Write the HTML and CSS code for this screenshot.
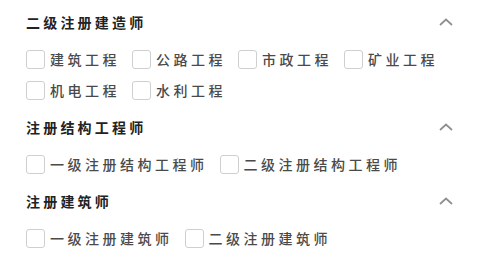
FILE: index.html
```html
<!DOCTYPE html>
<html lang="zh">
<head>
<meta charset="utf-8">
<link rel="stylesheet" href="styles.css">
</head>
<body>
<div class="panel">
  <section class="group">
    <div class="group-head">
      <span class="group-title">二级注册建造师</span>
      <svg class="chev" width="14" height="8" viewBox="0 0 14 8"><polyline points="1,7 7,1.5 13,7" fill="none" stroke="#8f8f8f" stroke-width="1.7"/></svg>
    </div>
    <div class="options">
      <label class="opt"><span class="box"></span><span class="txt">建筑工程</span></label>
      <label class="opt"><span class="box"></span><span class="txt">公路工程</span></label>
      <label class="opt"><span class="box"></span><span class="txt">市政工程</span></label>
      <label class="opt"><span class="box"></span><span class="txt">矿业工程</span></label>
      <label class="opt"><span class="box"></span><span class="txt">机电工程</span></label>
      <label class="opt"><span class="box"></span><span class="txt">水利工程</span></label>
    </div>
  </section>
  <section class="group">
    <div class="group-head">
      <span class="group-title">注册结构工程师</span>
      <svg class="chev" width="14" height="8" viewBox="0 0 14 8"><polyline points="1,7 7,1.5 13,7" fill="none" stroke="#8f8f8f" stroke-width="1.7"/></svg>
    </div>
    <div class="options">
      <label class="opt"><span class="box"></span><span class="txt">一级注册结构工程师</span></label>
      <label class="opt"><span class="box"></span><span class="txt">二级注册结构工程师</span></label>
    </div>
  </section>
  <section class="group">
    <div class="group-head">
      <span class="group-title">注册建筑师</span>
      <svg class="chev" width="14" height="8" viewBox="0 0 14 8"><polyline points="1,7 7,1.5 13,7" fill="none" stroke="#8f8f8f" stroke-width="1.7"/></svg>
    </div>
    <div class="options">
      <label class="opt"><span class="box"></span><span class="txt">一级注册建筑师</span></label>
      <label class="opt"><span class="box"></span><span class="txt">二级注册建筑师</span></label>
    </div>
  </section>
</div>
</body>
</html>
```
FILE: styles.css
```css
html, body {
  margin: 0;
  padding: 0;
  background: #ffffff;
}
body {
  font-family: "Noto Sans CJK SC", "Noto Sans", sans-serif;
}
.panel {
  display: flex;
  flex-direction: column;
  gap: 17px;
  padding: 12px 27px 0 26px;
}
.group-head {
  display: flex;
  align-items: center;
  justify-content: space-between;
  height: 20px;
  margin-bottom: 17px;
}
.group-title {
  font-size: 14px;
  font-weight: 700;
  color: #222;
  letter-spacing: 3.2px;
  line-height: 20px;
}
.chev {
  display: block;
  margin-top: -1px;
}
.options {
  display: flex;
  flex-wrap: wrap;
  row-gap: 11px;
}
.opt {
  display: flex;
  align-items: center;
  height: 20px;
  margin-right: 12px;
}
.box {
  width: 17px;
  height: 17px;
  border: 1px solid #cfcfcf;
  border-radius: 3px;
  box-sizing: content-box;
  margin-right: 5px;
}
.txt {
  font-size: 14px;
  font-weight: 500;
  color: #4a4a4a;
  letter-spacing: 3.5px;
  line-height: 20px;
}
```
